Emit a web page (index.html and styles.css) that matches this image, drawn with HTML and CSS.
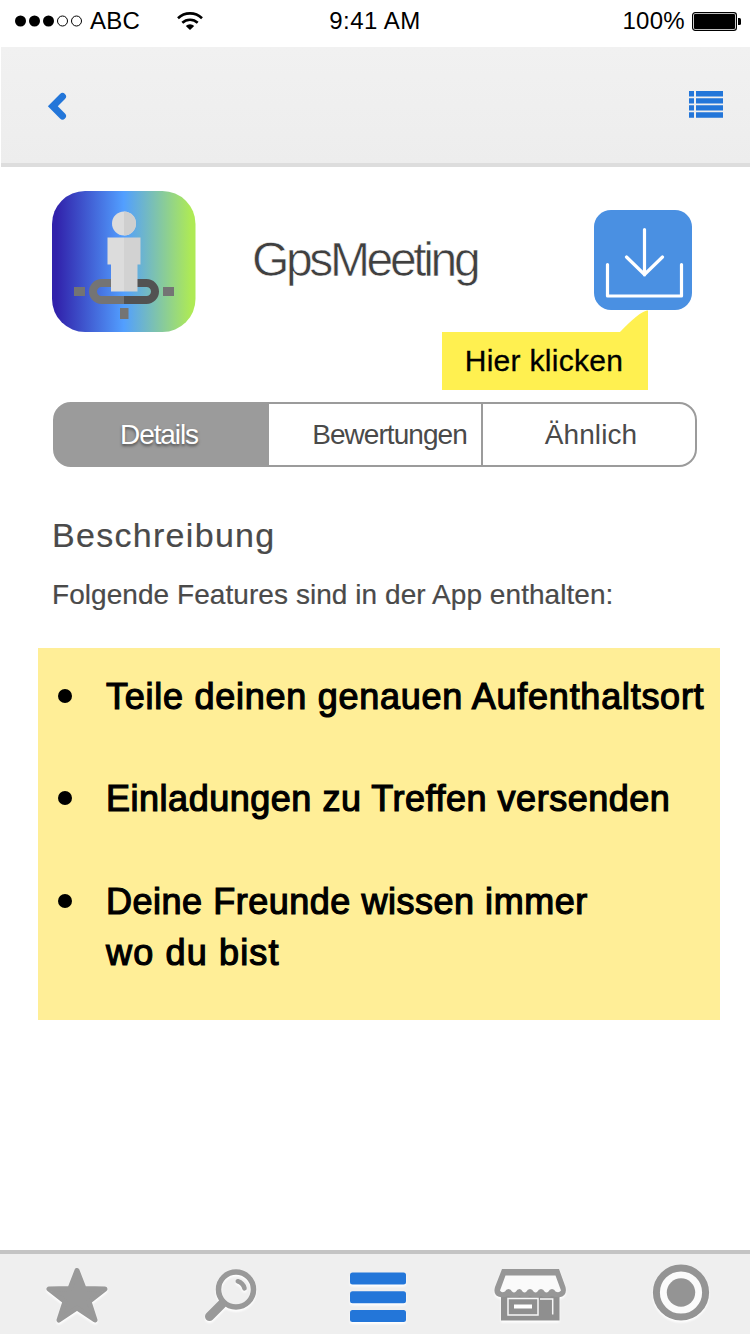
FILE: index.html
```html
<!DOCTYPE html>
<html lang="de">
<head>
<meta charset="utf-8">
<title>GpsMeeting</title>
<link rel="stylesheet" href="styles.css">
</head>
<body>
<div class="screen">
  <div class="status">
    <div class="status-left">
      <svg class="signal" width="68" height="12" viewBox="0 0 68 12">
        <circle cx="5.5" cy="6" r="5.5"/><circle cx="19.5" cy="6" r="5.5"/><circle cx="33.5" cy="6" r="5.5"/>
        <circle cx="47.5" cy="6" r="5" fill="none" stroke="#000"/><circle cx="61.5" cy="6" r="5" fill="none" stroke="#000"/>
      </svg>
      <span class="carrier">ABC</span>
      <svg class="wifi" width="26" height="18" viewBox="0 0 26 18">
        <path d="M1 6.2A17.4 17.4 0 0 1 25 6.2M5.3 10.8A11.2 11.2 0 0 1 20.7 10.8" fill="none" stroke="#000" stroke-width="2.6"/>
        <path d="M8.8 14A6 6 0 0 1 17.200 14L13 18Z"/>
      </svg>
    </div>
    <span class="time">9:41 AM</span>
    <div class="status-right">
      <span class="percent">100%</span>
      <svg width="49" height="19" viewBox="0 0 49 19">
        <rect x=".6" y=".6" width="43.8" height="17.8" rx="2.6" fill="none" stroke="#000" stroke-width="1.2"/>
        <rect x="2" y="2" width="41" height="15" rx="1"/>
        <path d="M46 6h1.500q1.500 0 1.500 1.500v4q0 1.500-1.500 1.500H46z"/>
      </svg>
    </div>
  </div>

  <header class="header">
    <svg width="22" height="34" viewBox="0 0 22 34"><path d="M16.500 10.500L6.800 20.200L16.500 30" fill="none" stroke="#2376d9" stroke-width="7" stroke-linejoin="miter" stroke-linecap="round"/></svg>
    <svg class="list-icon" width="34" height="27" viewBox="0 0 34 27" fill="#2376d9">
      <path d="M0 0h5v5.500H0zM7 0h27v5.500H7zM0 7.200h5v5.300H0zM7 7.200h27v5.300H7zM0 14.200h5v5.300H0zM7 14.200h27v5.300H7zM0 21.300h5v5.500H0zM7 21.300h27v5.500H7z"/>
    </svg>
  </header>

  <main class="content">
    <section class="app">
      <svg class="app-icon" width="144" height="141" viewBox="0 0 144 141">
        <defs><linearGradient id="sky"><stop offset="0" stop-color="#3122ab"/><stop offset=".03" stop-color="#3122ab"/><stop offset=".5" stop-color="#529fff"/><stop offset=".97" stop-color="#aeea55"/><stop offset="1" stop-color="#aeea55"/></linearGradient></defs>
        <rect width="143.500" height="141" rx="33" fill="url(#sky)"/>
        <path d="M72 92H49.500a8.500 8.500 0 0 0 0 17H72" fill="none" stroke="#747474" stroke-width="8"/>
        <path d="M72 92h22.500a8.500 8.500 0 0 1 0 17H72" fill="none" stroke="#525252" stroke-width="8"/>
        <path d="M22 96h11v9H22zM111 96h11v9h-11zM68 117h8.500v11H68z" fill="#747474"/>
        <circle cx="72" cy="32.500" r="12" fill="#dcdcdc"/>
        <path d="M72 20.500a12 12 0 0 1 0 24z" fill="#cfcfcf"/>
        <path d="M55.500 46.500H72v54H59v-27h-3.500z" fill="#dcdcdc"/>
        <path d="M72 46.500h16.500v27H85.500v27H72z" fill="#d2d2d2"/>
      </svg>
      <h1 class="app-name">GpsMeeting</h1>
      <div class="download">
        <svg width="98" height="100" viewBox="0 0 98 100" fill="none" stroke="#fff" stroke-width="3.200">
          <path d="M13.500 54.500V86H87.500V54.500" stroke-linecap="round" stroke-linejoin="round"/>
          <path d="M50.500 19.500V65M32.500 47L50.500 64.500L68.500 47" stroke-linecap="round" stroke-linejoin="round"/>
        </svg>
        <div class="callout"><span>Hier klicken</span>
          <svg class="callout-tip" width="29" height="23" viewBox="0 0 29 23"><path d="M0 23Q20 2 28 .5H29V23Z" fill="#fff050"/></svg>
        </div>
      </div>
    </section>

    <nav class="tabs">
      <span class="tab tab-active">Details</span>
      <span class="tab tab-reviews">Bewertungen</span>
      <span class="tab tab-similar">Ähnlich</span>
    </nav>

    <h2 class="heading">Beschreibung</h2>
    <p class="intro">Folgende Features sind in der App enthalten:</p>

    <ul class="features">
      <li><span class="wide">Teile deinen genauen Aufenthaltsort</span></li>
      <li><span>Einladungen zu Treffen versenden</span></li>
      <li><span>Deine Freunde wissen immer<br><span class="last-line">wo du bist</span></span></li>
    </ul>
  </main>

  <footer class="bar">
    <svg viewBox="0 0 150 80" width="150" height="80">
      <path d="M77 16.500L84 34.500L105 35L89 47.500L95 66L77 54L59 66L65 47.500L49 35L70 34.500Z" fill="#999" stroke="#999" stroke-width="5" stroke-linejoin="round"/>
    </svg>
    <svg viewBox="150 0 150 80" width="150" height="80" fill="none" stroke="#999" stroke-linecap="round">
      <circle cx="236" cy="35.500" r="17.500" stroke-width="5.500"/>
      <path d="M209.500 62.500L222 50" stroke-width="9"/>
      <path d="M237.800 27.300Q243 29 244.500 34.300" stroke-width="4.600"/>
    </svg>
    <svg viewBox="300 0 150 80" width="150" height="80" fill="#2376d9">
      <rect x="350" y="18.500" width="56" height="12" rx="2.500"/><rect x="350" y="37.200" width="56" height="12" rx="2.500"/><rect x="350" y="56" width="56" height="12" rx="2.500"/>
    </svg>
    <svg viewBox="450 0 150 80" width="150" height="80">
      <path d="M501 41H559.500V66.500H501Z" fill="#8f8f8f"/>
      <path d="M502 15H559L565.500 33Q567.500 42 559.500 43.300Q555.500 43.500 552 42Q546.500 45 541 42Q535.500 45 530 42Q524.500 45 519.500 42Q514 45 508.500 42Q505 43.500 501 43.300Q492.500 42 495 33Z" fill="#979797"/>
      <path d="M505.500 21.500H555.500L561 36.500Q559 39.500 555.500 37.500Q554.500 35 552 35Q549.500 35 548.500 37.500Q546.500 39.500 544.500 37.500Q543.500 35 541 35Q538.500 35 537.500 37.500Q535.700 39.500 533.500 37.500Q532.500 35 530 35Q527.500 35 526.500 37.500Q524.700 39.500 522.500 37.500Q521.500 35 519.500 35Q517 35 516 37.500Q514 39.500 512 37.500Q511 35 508.500 35Q506 35 505 37.500Q501.500 39.500 500 36.500Z" fill="#fafafa"/>
      <path d="M508 44.500H538V61H508ZM552.700 60.500V45H540" fill="none" stroke="#f7f7f7" stroke-width="1.500"/>
      <path d="M514 50.500H532V54.500H514Z" fill="#fff"/>
    </svg>
    <svg viewBox="600 0 150 80" width="150" height="80">
      <circle cx="681" cy="38.500" r="24.600" fill="#fbfbfb" stroke="#949494" stroke-width="7"/>
      <circle cx="681" cy="38.500" r="14.200" fill="#949494"/>
    </svg>
  </footer>
</div>
</body>
</html>
```
FILE: styles.css
```css
* { box-sizing: border-box; }
body {
  margin: 0;
  background: #fff;
  font-family: "Liberation Sans", Arial, sans-serif;
  color: #000;
}
svg { display: block; flex: none; }
.screen {
  width: 750px;
  height: 1334px;
  display: flex;
  flex-direction: column;
  overflow: hidden;
}

.status {
  height: 47px;
  display: grid;
  grid-template-columns: 1fr auto 1fr;
  padding: 1px 9px 6px 15px;
  align-items: center;
  font-size: 24px;
  line-height: 28px;
  white-space: nowrap;
}
.status-left, .status-right { display: flex; align-items: center; }
.status-right { justify-content: flex-end; gap: 7px; }
.carrier { margin-left: 7px; letter-spacing: .3px; }
.wifi { margin-left: 37px; }
.percent { letter-spacing: .3px; }
.time { margin-left: -6px; letter-spacing: .5px; }

.header {
  height: 120px;
  margin-left: 1px;
  padding: 0 27px 4px 45px;
  display: flex;
  justify-content: space-between;
  align-items: center;
  background: linear-gradient(#f1f1f1, #ededed);
  border-bottom: 4px solid #ddd;
}
.list-icon { margin-top: 2px; }

.content { flex: 1; }

.app {
  height: 235px;
  padding: 24px 58px 0 52px;
  display: flex;
  align-items: flex-start;
}
.app-name {
  margin: 41px auto 0 56px;
  font-size: 48px;
  font-weight: 400;
  line-height: 56px;
  letter-spacing: -3.350px;
  color: #404040;
  -webkit-text-stroke: .6px #fff;
}
.download {
  position: relative;
  margin-top: 19px;
  width: 98px;
  height: 100px;
  border-radius: 17px;
  background: #4a90e2;
}
.callout {
  position: absolute;
  right: 44px;
  top: 122px;
  width: 206px;
  height: 58px;
  padding-right: 2px;
  line-height: 58px;
  text-align: center;
  font-size: 30px;
  letter-spacing: .3px;
  white-space: nowrap;
  background: #fff050;
  -webkit-text-stroke: .3px #000;
}
.callout-tip { position: absolute; right: 0; top: -22px; }

.tabs {
  width: 644px;
  height: 65px;
  margin-left: 53px;
  display: grid;
  grid-template-columns: 214px 214px 1fr;
  border: 2px solid #9b9b9b;
  border-radius: 18px;
  background: linear-gradient(90deg, #9b9b9b 214px, #fff 214px);
  overflow: hidden;
  font-size: 28px;
  line-height: 62px;
  text-align: center;
  color: #4a4a4a;
}
.tab-active {
  padding-right: 6px;
  color: #fff;
  letter-spacing: -1.100px;
  text-shadow: 0 2px 3px rgba(0, 0, 0, .5);
}
.tab-reviews { padding-left: 29px; letter-spacing: -.95px; border-right: 2px solid #9b9b9b; }
.tab-similar { padding-left: 4px; letter-spacing: .1px; }

.heading {
  margin: 49px 0 0 52px;
  font-size: 34px;
  font-weight: 400;
  line-height: 38px;
  letter-spacing: 1.300px;
  color: #4a4a4a;
  -webkit-text-stroke: .2px #4a4a4a;
}
.intro {
  margin: 25px 0 0 52px;
  font-size: 28px;
  line-height: 32px;
  letter-spacing: .06px;
  white-space: nowrap;
  color: #4a4a4a;
  -webkit-text-stroke: .2px #4a4a4a;
}

.features {
  margin: 37px 0 0 38px;
  width: 682px;
  height: 372px;
  padding: 23px 0 0 20px;
  display: flex;
  flex-direction: column;
  gap: 51.100px;
  list-style: none;
  background: #ffee97;
  font-size: 36px;
  line-height: 51.200px;
  white-space: nowrap;
}
.features li { display: flex; }
.features span { letter-spacing: .52px; -webkit-text-stroke: 1.200px #000; }
.features .wide { letter-spacing: .74px; }
.features .last-line { letter-spacing: 1.150px; }
.features li::before {
  content: "";
  flex: none;
  width: 14px;
  height: 14px;
  margin: 18px 34px 0 0;
  border-radius: 50%;
  background: #000;
}

.bar {
  height: 84px;
  display: flex;
  background: #efefef;
  border-top: 4px solid #c4c4c4;
}
.bar svg { filter: drop-shadow(0 2px 1px #fff); }
```
